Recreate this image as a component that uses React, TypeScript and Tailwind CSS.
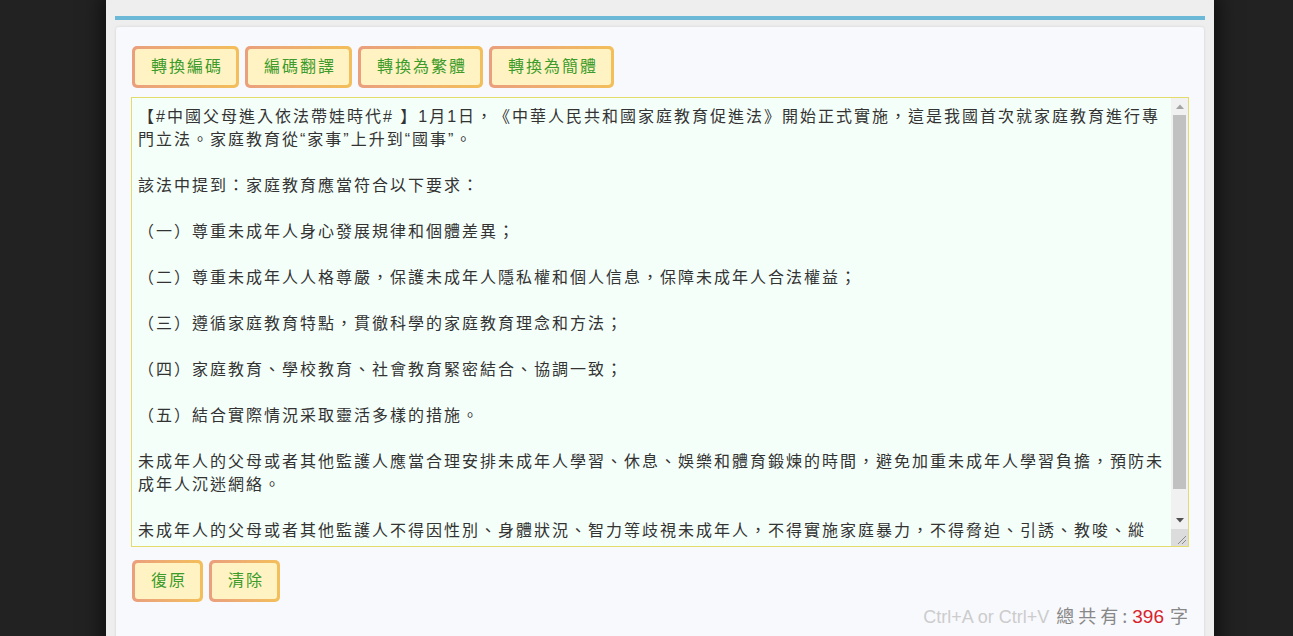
import React from "react";

const TEXT = `【#中國父母進入依法帶娃時代# 】1月1日，《中華人民共和國家庭教育促進法》開始正式實施，這是我國首次就家庭教育進行專門立法。家庭教育從“家事”上升到“國事”。

該法中提到：家庭教育應當符合以下要求：

（一）尊重未成年人身心發展規律和個體差異；

（二）尊重未成年人人格尊嚴，保護未成年人隱私權和個人信息，保障未成年人合法權益；

（三）遵循家庭教育特點，貫徹科學的家庭教育理念和方法；

（四）家庭教育、學校教育、社會教育緊密結合、協調一致；

（五）結合實際情況采取靈活多樣的措施。

未成年人的父母或者其他監護人應當合理安排未成年人學習、休息、娛樂和體育鍛煉的時間，避免加重未成年人學習負擔，預防未成年人沉迷網絡。

未成年人的父母或者其他監護人不得因性別、身體狀況、智力等歧視未成年人，不得實施家庭暴力，不得脅迫、引誘、教唆、縱容、利用未成年人從事違反法律法規和社會公德的活動。`;

const FONT = '"Liberation Sans", "Noto Sans CJK TC", sans-serif';

function Btn({ label }: { label: string }) {
  return (
    <div className="rounded-[5px] bg-gradient-to-r from-[#ea9f7d] to-[#f3bf5a] p-[3px]">
      <button
        className="h-[36px] rounded-[3px] bg-[#fff3c3] pl-[16px] pr-[13px] text-[16px] leading-[36px] tracking-[2px] text-[#3d9b2b] [text-spacing-trim:space-all]"
        style={{ fontFamily: FONT }}
      >
        {label}
      </button>
    </div>
  );
}

function Scrollbar() {
  return (
    <div className="flex w-[17px] shrink-0 flex-col bg-[#f1f1f1]">
      <div className="flex h-[17px] items-center justify-center">
        <svg width="8" height="5" viewBox="0 0 8 5">
          <path d="M0 5 L4 0.5 L8 5 Z" fill="#a3a3a3" />
        </svg>
      </div>
      <div className="flex-1 px-[2px]">
        <div className="h-[374px] bg-[#c1c1c1]" />
      </div>
      <div className="flex h-[17px] items-center justify-center">
        <svg width="8" height="5" viewBox="0 0 8 5">
          <path d="M0 0 L4 4.5 L8 0 Z" fill="#505050" />
        </svg>
      </div>
      <div className="h-[17px] bg-[#dcdcdc]">
        <svg width="17" height="17" viewBox="0 0 17 17">
          <path d="M15 7 L7 15 M15 11 L11 15" stroke="#8a8a8a" strokeWidth="1" />
        </svg>
      </div>
    </div>
  );
}

export default function App() {
  return (
    <div className="flex min-h-screen bg-[#222222] pl-[106px]">
      <div className="w-[1108px] bg-[#eeeeee] px-[10px] pt-[16px] shadow-[0_0_18px_6px_rgba(0,0,0,0.5)]">
        <div className="-mx-px h-[4px] bg-[#6cb9d7]" />
        <div className="mt-[7px] rounded-t-[3px] bg-[#f8f9fd] px-[15px] pt-[19px] pb-[20px] shadow-[0_0_3px_rgba(0,0,0,0.12)]">
          <div className="flex gap-[6px] pl-px">
            <Btn label="轉換編碼" />
            <Btn label="編碼翻譯" />
            <Btn label="轉換為繁體" />
            <Btn label="轉換為簡體" />
          </div>
          <div className="mt-[9px] flex h-[450px] border border-[#e3dc6a] bg-[#f5fffa]">
            <textarea
              className="block h-[444px] min-w-0 flex-1 resize-none overflow-hidden bg-transparent pt-[7px] pb-0 pr-[4px] pl-[6px] text-[16px] leading-[23px] tracking-[2px] text-[#333333] outline-none [text-spacing-trim:space-all]"
              style={{ fontFamily: FONT }}
              defaultValue={TEXT}
            />
            <Scrollbar />
          </div>
          <div className="mt-[13px] flex gap-[6px] pl-px">
            <Btn label="復原" />
            <Btn label="清除" />
          </div>
          <div className="mt-0 flex items-baseline justify-end pr-[1px]">
            <span
              className="text-[18px] text-[#cccccc]"
              style={{ fontFamily: '"Liberation Sans", Arial, sans-serif' }}
            >
              Ctrl+A or Ctrl+V
            </span>
            <span
              className="ml-[7px] text-[18px] tracking-[4px] text-[#888888]"
              style={{ fontFamily: '"Noto Sans CJK TC", sans-serif' }}
            >
              總共有
            </span>
            <span
              className="mr-[5px] text-[18px] text-[#888888]"
              style={{ fontFamily: '"Noto Sans CJK TC", sans-serif' }}
            >
              :
            </span>
            <span
              className="text-[19px] text-[#d8232a]"
              style={{ fontFamily: '"Liberation Sans", Arial, sans-serif' }}
            >
              396
            </span>
            <span
              className="ml-[6px] text-[18px] text-[#888888]"
              style={{ fontFamily: '"Noto Sans CJK TC", sans-serif' }}
            >
              字
            </span>
          </div>
        </div>
      </div>
    </div>
  );
}
